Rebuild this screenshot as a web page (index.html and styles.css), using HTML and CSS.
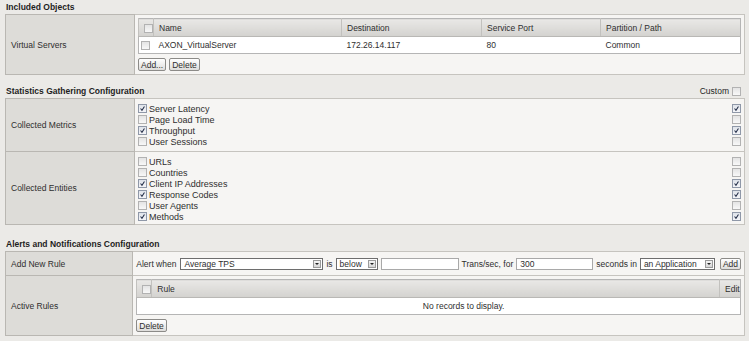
FILE: index.html
```html
<!DOCTYPE html>
<html lang="en">
  <head>
    <meta charset="UTF-8" />
    <title>Analytics Profile</title>
    <link rel="stylesheet" href="styles.css">
  </head>
  <body>
    <!-- Included objects -->
    <div class="section-title">Included Objects</div>
    <table class="props">
      <tr>
        <td class="label">Virtual Servers</td>
        <td class="value">
          <table class="grid">
            <tr class="head">
              <th class="col-cb"><span class="cb"></span></th>
              <th class="col-name">Name</th>
              <th class="col-dest">Destination</th>
              <th class="col-port">Service Port</th>
              <th>Partition / Path</th>
            </tr>
            <tr>
              <td class="col-cb"><span class="cb"></span></td>
              <td>AXON_VirtualServer</td>
              <td>172.26.14.117</td>
              <td>80</td>
              <td>Common</td>
            </tr>
          </table>
          <div class="buttons">
            <button class="btn">Add...</button>
            <button class="btn">Delete</button>
          </div>
        </td>
      </tr>
    </table>

    <!-- Statistics -->
    <div class="section-title with-custom">
      <span>Statistics Gathering Configuration</span>
      <span class="custom">Custom <span class="cb"></span></span>
    </div>
    <table class="props">
      <tr>
        <td class="label">Collected Metrics</td>
        <td class="value list metrics">
          <div class="item"><span class="left"><span class="cb on"><svg viewBox="0 0 9 9"><path d="M2 4.5 L3.8 6.8 L7 1.8"/></svg></span>Server Latency</span><span class="cb on"><svg viewBox="0 0 9 9"><path d="M2 4.5 L3.8 6.8 L7 1.8"/></svg></span></div>
          <div class="item"><span class="left"><span class="cb"></span>Page Load Time</span><span class="cb"></span></div>
          <div class="item"><span class="left"><span class="cb on"><svg viewBox="0 0 9 9"><path d="M2 4.5 L3.8 6.8 L7 1.8"/></svg></span>Throughput</span><span class="cb on"><svg viewBox="0 0 9 9"><path d="M2 4.5 L3.8 6.8 L7 1.8"/></svg></span></div>
          <div class="item"><span class="left"><span class="cb"></span>User Sessions</span><span class="cb"></span></div>
        </td>
      </tr>
      <tr>
        <td class="label">Collected Entities</td>
        <td class="value list entities">
          <div class="item"><span class="left"><span class="cb"></span>URLs</span><span class="cb"></span></div>
          <div class="item"><span class="left"><span class="cb"></span>Countries</span><span class="cb"></span></div>
          <div class="item"><span class="left"><span class="cb on"><svg viewBox="0 0 9 9"><path d="M2 4.5 L3.8 6.8 L7 1.8"/></svg></span>Client IP Addresses</span><span class="cb on"><svg viewBox="0 0 9 9"><path d="M2 4.5 L3.8 6.8 L7 1.8"/></svg></span></div>
          <div class="item"><span class="left"><span class="cb on"><svg viewBox="0 0 9 9"><path d="M2 4.5 L3.8 6.8 L7 1.8"/></svg></span>Response Codes</span><span class="cb on"><svg viewBox="0 0 9 9"><path d="M2 4.5 L3.8 6.8 L7 1.8"/></svg></span></div>
          <div class="item"><span class="left"><span class="cb"></span>User Agents</span><span class="cb"></span></div>
          <div class="item"><span class="left"><span class="cb on"><svg viewBox="0 0 9 9"><path d="M2 4.5 L3.8 6.8 L7 1.8"/></svg></span>Methods</span><span class="cb on"><svg viewBox="0 0 9 9"><path d="M2 4.5 L3.8 6.8 L7 1.8"/></svg></span></div>
        </td>
      </tr>
    </table>

    <!-- Alerts -->
    <div class="section-title alerts-title">Alerts and Notifications Configuration</div>
    <table class="props">
      <tr>
        <td class="label">Add New Rule</td>
        <td class="value rule-row">
          <div class="rule">
            <span class="txt">Alert when</span>
            <span class="select w-metric">Average TPS<span class="arrow"></span></span>
            <span class="txt">is</span>
            <span class="select w-cmp">below<span class="arrow"></span></span>
            <span class="input w-thresh"></span>
            <span class="txt">Trans/sec, for</span>
            <span class="input w-secs">300</span>
            <span class="txt">seconds in</span>
            <span class="select w-scope">an Application<span class="arrow"></span></span>
            <button class="btn add-rule">Add</button>
          </div>
        </td>
      </tr>
      <tr>
        <td class="label">Active Rules</td>
        <td class="value">
          <table class="grid">
            <tr class="head">
              <th class="col-cb"><span class="cb"></span></th>
              <th>Rule</th>
              <th class="col-edit">Edit</th>
            </tr>
            <tr>
              <td colspan="3" class="empty">No records to display.</td>
            </tr>
          </table>
          <div class="buttons">
            <button class="btn">Delete</button>
          </div>
        </td>
      </tr>
    </table>
  </body>
</html>
```
FILE: styles.css
```css
/* Reset */
* {
  margin: 0;
  padding: 0;
  box-sizing: border-box;
}

body {
  background-color: #ebeae7;
  color: #2e2e2e;
  font-family: "Liberation Sans", Arial, sans-serif;
  font-size: 8.5px;
  padding: 0 4px 0 5px;
  width: 749px;
  height: 341px;
  overflow: hidden;
}

.section-title {
  font-weight: bold;
  height: 14px;
  line-height: 14px;
  padding-left: 1px;
  color: #1e1e1e;
}

.with-custom {
  display: flex;
  justify-content: space-between;
  margin-top: 9px;
}

.alerts-title {
  margin-top: 12px;
}

.custom {
  font-weight: normal;
  display: flex;
  align-items: center;
  gap: 3px;
  padding-right: 4px;
}

/* property tables */
.props {
  width: 740px;
  border-collapse: collapse;
  border: 1px solid #b3b1ac;
}

.props td.label {
  width: 129px;
  background-color: #dddcd8;
  border: 1px solid #b9b7b2;
  padding-left: 5px;
  vertical-align: middle;
}

.props td.value {
  background-color: #f6f5f3;
  border: 1px solid #c6c4bf;
  padding: 3px 3px 3px 3px;
  vertical-align: top;
}

/* inner grids */
.grid {
  width: 100%;
  border-collapse: collapse;
  border: 1px solid #b5b5b5;
  background-color: #fff;
}

.grid tr.head th {
  height: 18px;
  font-weight: normal;
  text-align: left;
  padding-left: 5px;
  background: linear-gradient(#e9e8e6, #d3d2cf);
  border-left: 1px solid #c2c1be;
  border-bottom: 1px solid #b9b8b5;
}

.grid td {
  height: 17px;
  padding-left: 5px;
}

.grid .col-cb {
  width: 14px;
  padding-left: 2px;
}

.grid .col-name { width: 188px; }
.grid .col-dest { width: 140px; }
.grid .col-port { width: 119px; }
.grid .col-edit { width: 21px; padding-left: 2px; }

.grid td.empty {
  text-align: center;
  padding-left: 50px;
}

.buttons {
  display: flex;
  gap: 3px;
  margin-top: 4px;
}

.btn {
  font-family: inherit;
  font-size: 8.5px;
  color: #2e2e2e;
  height: 13px;
  padding: 0 2px;
  border: 1px solid #8c8b88;
  border-radius: 2px;
  background: linear-gradient(#ffffff, #dedddb);
}

/* checkboxes */
.cb {
  display: inline-block;
  width: 9px;
  height: 9px;
  border: 1px solid #b2b2b2;
  background: linear-gradient(#e4e4e4, #f8f8f8);
  vertical-align: middle;
  position: relative;
}

.cb.on {
  border-color: #8f98a8;
  background: linear-gradient(#dfe3ea, #f4f5f8);
}

.cb svg {
  width: 7px;
  height: 7px;
  display: block;
}

.cb svg path {
  fill: none;
  stroke: #1f2a44;
  stroke-width: 1.3;
}

.list {
  padding: 4px 3px 2px 3px !important;
}

.item {
  display: flex;
  justify-content: space-between;
  align-items: center;
  height: 11px;
  font-size: 9px;
}

.item .left {
  display: flex;
  align-items: center;
  gap: 2px;
}

.metrics {
  height: 53px;
}

.entities {
  height: 73px;
}

/* alert rule row */
.rule-row {
  height: 24px;
  padding-top: 6px !important;
}

.rule {
  display: flex;
  align-items: center;
  gap: 3px;
  height: 12px;
}

.rule .txt {
  white-space: nowrap;
  flex-shrink: 0;
}

.select,
.input {
  display: inline-flex;
  align-items: center;
  flex-shrink: 0;
  height: 12px;
  border: 1px solid #6e6e6e;
  background-color: #fff;
  padding-left: 3px;
  position: relative;
  white-space: nowrap;
}

.input {
  border-color: #a9a9a9;
}

.arrow {
  position: absolute;
  right: 1px;
  top: 1px;
  width: 8px;
  height: 8px;
  border: 1px solid #9a9a9a;
  background: linear-gradient(#f4f4f4, #d6d6d6);
}

.arrow::after {
  content: "";
  position: absolute;
  left: 1px;
  top: 2px;
  border-left: 2px solid transparent;
  border-right: 2px solid transparent;
  border-top: 2px solid #222;
}

.w-metric { width: 143px; margin-left: 1px; }
.w-cmp { width: 42px; }
.w-thresh { width: 78px; }
.w-secs { width: 77px; }
.w-scope { width: 75px; }

.add-rule {
  margin-left: 2px;
  height: 12px;
  flex-shrink: 0;
}
```
